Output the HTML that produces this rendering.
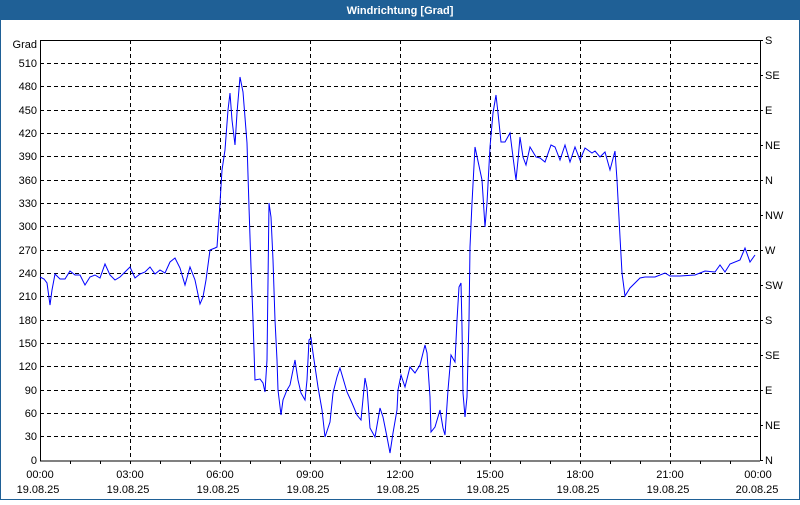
<!DOCTYPE html>
<html><head><style>
body{margin:0;width:800px;height:500px;overflow:hidden;background:#fff;font-family:"Liberation Sans",sans-serif}
</style></head><body>
<svg width="800" height="500" xmlns="http://www.w3.org/2000/svg" font-family="Liberation Sans, sans-serif" font-size="11">
<rect x="0" y="0" width="800" height="500" fill="#fff"/>
<rect x="0.5" y="0.5" width="799" height="499" fill="none" stroke="#1f6096"/>
<rect x="0" y="0" width="800" height="20" fill="#1f6096"/>
<text x="400" y="14" fill="#fff" font-weight="bold" text-anchor="middle">Windrichtung [Grad]</text>
<g stroke="#000" stroke-dasharray="4,3" stroke-width="1">
<path d="M40 63.5H760M40 86.5H760M40 110.5H760M40 133.5H760M40 156.5H760M40 180.5H760M40 203.5H760M40 226.5H760M40 250.5H760M40 273.5H760M40 296.5H760M40 320.5H760M40 343.5H760M40 366.5H760M40 390.5H760M40 413.5H760M40 436.5H760"/>
<path d="M130.5 40V460M220.5 40V460M310.5 40V460M400.5 40V460M490.5 40V460M580.5 40V460M670.5 40V460"/>
</g>
<g stroke="#000" stroke-width="1" fill="none">
<path d="M40.5 40V461H760M40 40.5H760M760.5 40V461"/>
<path d="M70.5 461v3M100.5 461v3M130.5 461v3M160.5 461v3M190.5 461v3M220.5 461v3M250.5 461v3M280.5 461v3M310.5 461v3M340.5 461v3M370.5 461v3M400.5 461v3M430.5 461v3M460.5 461v3M490.5 461v3M520.5 461v3M550.5 461v3M580.5 461v3M610.5 461v3M640.5 461v3M670.5 461v3M700.5 461v3M730.5 461v3"/>
<path d="M760 40.5h3M760 75.5h3M760 110.5h3M760 145.5h3M760 180.5h3M760 215.5h3M760 250.5h3M760 285.5h3M760 320.5h3M760 355.5h3M760 390.5h3M760 425.5h3M760 460.5h3"/>
</g>
<polyline fill="none" stroke="#0000ff" stroke-width="1" points="40,277 44,279 47,283 50,305 52,290 55,274 60,279 65,279 70,271 75,275 80,275 85,285 90,277 95,275 100,278 105,264 110,275 115,280 120,277 130,267 135,278 140,274 145,272 150,267 155,274 160,270 165,273 170,262 175,258 180,268 185,285 190,267 195,280 200,304 203,297 206,280 210,250 215,248 217,247 220,203 222,170 225,150 228,110 230,93 232,120 235,145 237,113 240,77 243,92 247,143 249,207 251,267 253,320 255,380 260,379 263,383 265,392 267,360 269,203 271,217 273,260 275,320 277,360 278,390 281,415 283,400 287,390 290,385 295,360 298,380 301,393 305,400 307,380 309,340 311,338 313,353 318,387 322,410 325,437 330,422 333,393 337,377 340,368 347,392 352,403 357,415 361,420 365,378 367,388 370,428 375,437 380,408 383,417 387,437 390,453 393,433 397,410 398,390 401,375 405,387 410,367 415,373 420,365 425,345 427,353 430,397 431,432 435,427 440,410 443,428 445,435 448,390 451,355 455,362 457,320 459,287 461,283 462,327 463,393 465,417 467,397 469,320 470,247 472,203 475,147 482,180 485,227 487,203 490,147 493,113 496,95 498,113 501,142 505,142 510,133 513,157 516,180 518,160 520,137 523,157 526,165 530,147 536,157 540,158 545,162 551,145 555,147 560,160 565,145 570,162 575,147 580,160 585,148 592,153 595,151 600,157 605,152 610,170 615,151 617,180 620,237 622,273 625,296 630,288 640,278 645,277 655,277 665,273 670,276 680,276 695,275 705,271 715,272 720,265 725,272 730,264 740,260 745,248 750,262 755,255"/>
<g text-anchor="end" fill="#000">
<text x="37" y="48">Grad</text>
<text x="37" y="67">510</text><text x="37" y="90">480</text><text x="37" y="114">450</text><text x="37" y="137">420</text><text x="37" y="160">390</text><text x="37" y="184">360</text><text x="37" y="207">330</text><text x="37" y="230">300</text><text x="37" y="254">270</text><text x="37" y="277">240</text><text x="37" y="300">210</text><text x="37" y="324">180</text><text x="37" y="347">150</text><text x="37" y="370">120</text><text x="37" y="394">90</text><text x="37" y="417">60</text><text x="37" y="440">30</text><text x="37" y="464">0</text>
</g>
<g fill="#000">
<text x="765" y="44">S</text><text x="765" y="79">SE</text><text x="765" y="114">E</text><text x="765" y="149">NE</text><text x="765" y="184">N</text><text x="765" y="219">NW</text><text x="765" y="254">W</text><text x="765" y="289">SW</text><text x="765" y="324">S</text><text x="765" y="359">SE</text><text x="765" y="394">E</text><text x="765" y="429">NE</text><text x="765" y="464">N</text>
</g>
<g text-anchor="middle" fill="#000">
<text x="40" y="478">00:00</text><text x="130" y="478">03:00</text><text x="220" y="478">06:00</text><text x="310" y="478">09:00</text><text x="400" y="478">12:00</text><text x="490" y="478">15:00</text><text x="580" y="478">18:00</text><text x="670" y="478">21:00</text><text x="758" y="478">00:00</text>
<text x="38" y="493">19.08.25</text><text x="128" y="493">19.08.25</text><text x="218" y="493">19.08.25</text><text x="308" y="493">19.08.25</text><text x="398" y="493">19.08.25</text><text x="488" y="493">19.08.25</text><text x="578" y="493">19.08.25</text><text x="668" y="493">19.08.25</text><text x="757" y="493">20.08.25</text>
</g>
</svg>
</body></html>
